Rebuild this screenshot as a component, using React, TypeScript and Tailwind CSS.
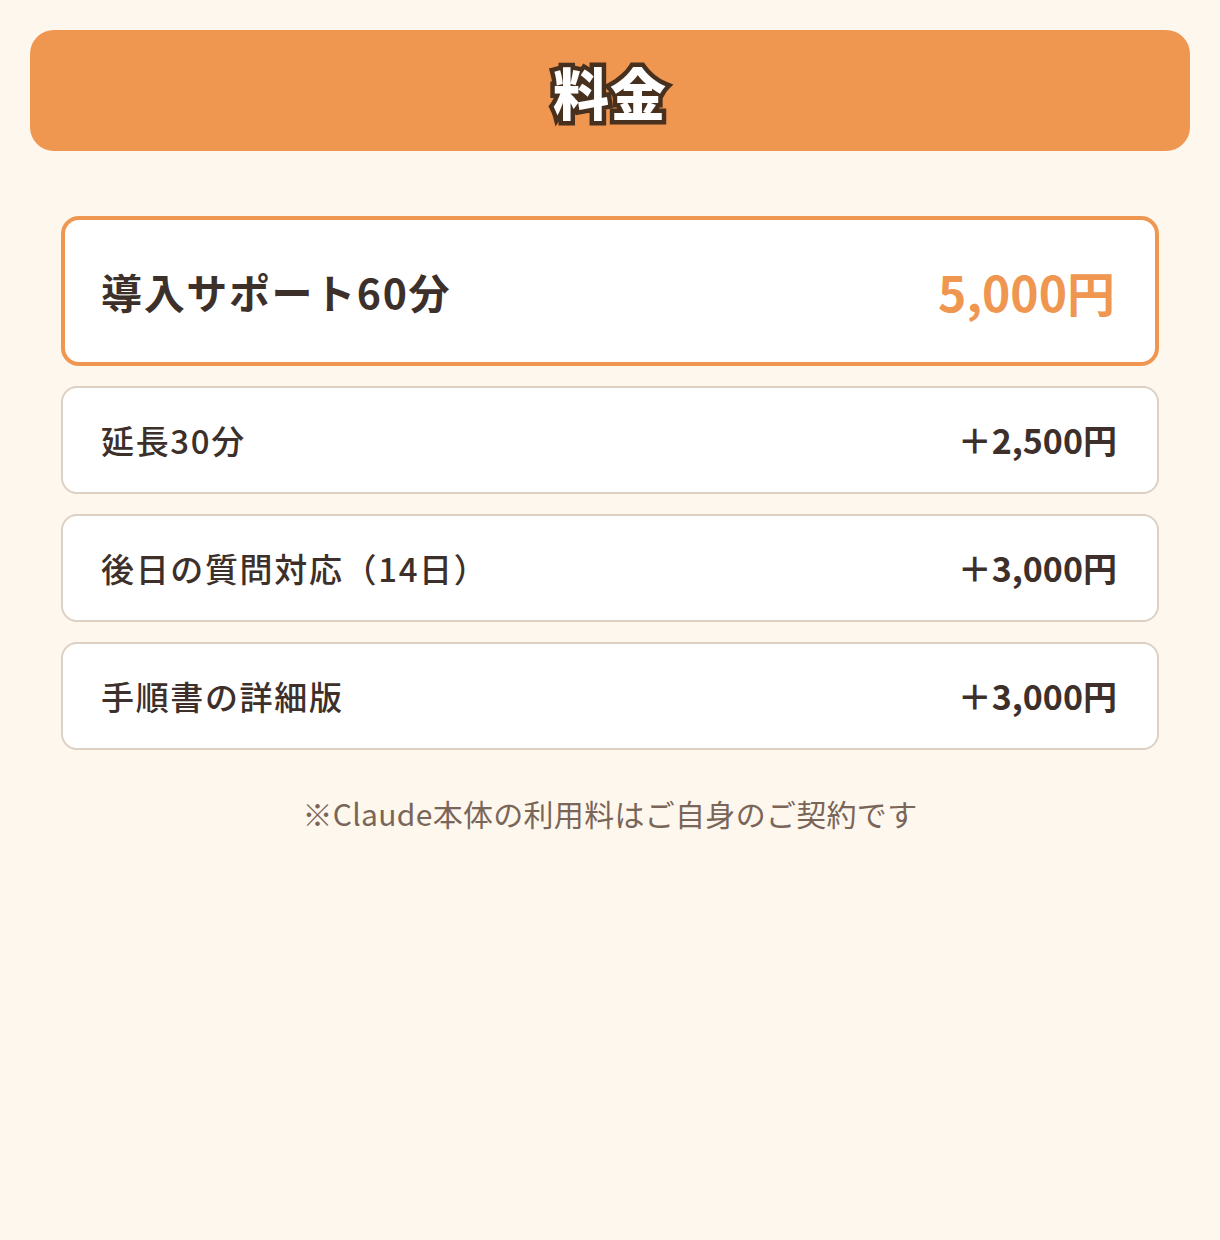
import React from "react";

const font = "font-['Noto_Sans_CJK_JP','Noto_Sans',sans-serif]";

const rows = [
  { label: "延長30分", price: "＋2,500円" },
  { label: "後日の質問対応（14日）", price: "＋3,000円" },
  { label: "手順書の詳細版", price: "＋3,000円" },
];

export default function App() {
  return (
    <div className={`min-h-[1240px] w-full bg-[#fef7ee] p-[30px] ${font} text-[#3d302a]`}>
      <div className="flex h-[121px] items-center justify-center rounded-[24px] bg-[#ef9650]">
        <h1 className="text-[56px] font-black leading-none tracking-[0.02em] text-white [-webkit-text-stroke:9px_#48301f] [paint-order:stroke_fill]">
          料金
        </h1>
      </div>

      <div className="mx-[31px] mt-[65px] flex flex-col gap-[20px]">
        <div className="flex h-[150px] items-center justify-between rounded-[18px] border-[4px] border-[#ef9650] bg-white pl-[36px] pr-[40px]">
          <span className="text-[41px] font-bold leading-none tracking-[0.04em]">導入サポート60分</span>
          <span className="text-[48px] font-bold leading-none text-[#ef9650]">5,000円</span>
        </div>
        {rows.map((r) => (
          <div
            key={r.label}
            className="flex h-[108px] items-center justify-between rounded-[16px] border-2 border-[#ddd0c4] bg-white pl-[38px] pr-[40px]"
          >
            <span className="text-[33px] font-medium leading-none tracking-[0.05em]">{r.label}</span>
            <span className="text-[34px] font-semibold leading-none">{r.price}</span>
          </div>
        ))}
      </div>

      <p className="mt-[48px] text-center text-[30px] leading-none tracking-[0.01em] text-[#7a6658]">
        ※Claude本体の利用料はご自身のご契約です
      </p>
    </div>
  );
}
